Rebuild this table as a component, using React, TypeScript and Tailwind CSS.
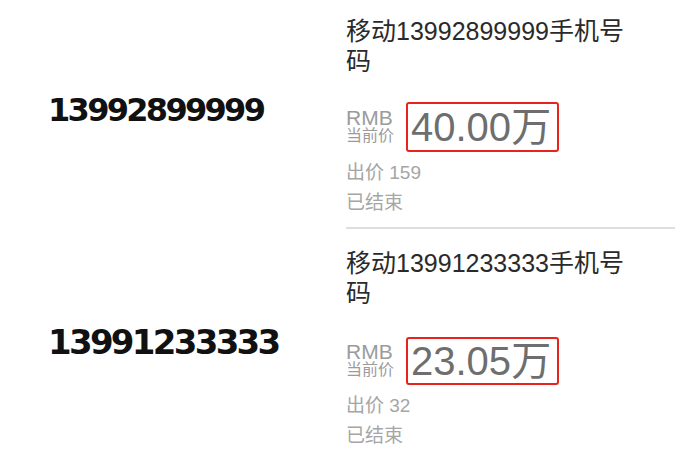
const items = [
  {
    number: '13992899999',
    numClass: 'pt-[94px] text-[32px]',
    rowClass: 'h-[227px]',
    titleClass: 'pt-[16px]',
    boxClass: 'mt-[26px] h-[50px]',
    price: '40.00',
    bids: 159,
  },
  {
    number: '13991233333',
    numClass: 'pt-[96px] text-[34px]',
    rowClass: 'h-[222px]',
    titleClass: 'pt-[19px]',
    boxClass: 'mt-[29px] h-[48px]',
    price: '23.05',
    bids: 32,
  },
]

const sans = 'font-["Liberation_Sans","Noto_Sans_CJK_SC",sans-serif]'

export default function App() {
  return (
    <div className={`w-[675px] h-[451px] overflow-hidden bg-white ${sans}`}>
      {items.map((item, i) => (
        <div key={item.number}>
          {i > 0 && (
            <div className="flex">
              <div className="w-[346px] shrink-0" />
              <div className="h-[2px] flex-1 bg-[#dedede]" />
            </div>
          )}
          <div className={`flex ${item.rowClass}`}>
            {/* left: big phone number */}
            <div className="w-[346px] shrink-0 pl-[48px]">
              <div
                className={`font-["DejaVu_Sans",sans-serif] font-bold leading-none tracking-[-2.7px] text-[#111] ${item.numClass}`}
              >
                {item.number}
              </div>
            </div>

            {/* right: listing */}
            <div className="flex-1">
              <div className={`max-w-[292px] text-[25px] leading-[30px] text-[#2a2a2a] ${item.titleClass}`}>
                移动{item.number}手机号码
              </div>

              <div className={`flex items-center gap-[12px] ${item.boxClass}`}>
                <div className="flex flex-col text-[#9b9b9b]">
                  <span className="text-[21px] leading-[17px]">RMB</span>
                  <span className="text-[16px] leading-[19px]">当前价</span>
                </div>
                <div className="flex h-full items-center rounded-[3px] border-2 border-[#e8231c] pl-[3px] pr-[6px]">
                  <span className="text-[40px] leading-none text-[#6e6e6e]">
                    {item.price}万
                  </span>
                </div>
              </div>

              <div className="mt-[6px] text-[19px] leading-[30px] text-[#a6a6a6]">
                <div>出价 {item.bids}</div>
                <div>已结束</div>
              </div>
            </div>
          </div>
        </div>
      ))}
    </div>
  )
}
